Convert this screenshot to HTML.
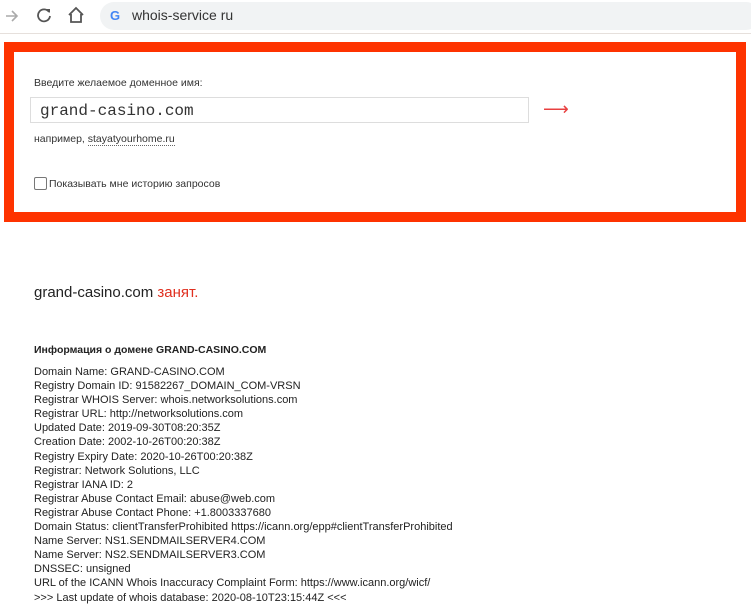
<!DOCTYPE html>
<html><head><meta charset="utf-8"><style>
body{margin:0;width:751px;height:613px;background:#fff;position:relative;overflow:hidden;font-family:"Liberation Sans","DejaVu Sans",sans-serif;color:#222}
.a{position:absolute;white-space:nowrap}
.bar{position:absolute;left:0;top:0;width:751px;height:33px;background:#fff;border-bottom:1px solid #e6e0dc}
.url{position:absolute;left:100px;top:2px;width:660px;height:28px;border-radius:14px;background:#f1f3f4}
.box{position:absolute;left:4px;top:42px;width:722px;height:160px;border:10px solid #fe3300;background:#fff}
.inp{position:absolute;left:30px;top:97px;width:499px;height:26px;border:1px solid #ddd;font-family:"Liberation Mono",monospace;font-size:16px;line-height:26px;padding-left:9px;box-sizing:border-box;color:#333}
.w{font-size:11px;line-height:14.1px;color:#222}
</style></head><body>
<div class="bar">
<svg class="a" style="left:4px;top:8px" width="16" height="16" viewBox="0 0 16 16"><path d="M2 8h11M8 3l5 5-5 5" stroke="#aaa" stroke-width="1.6" fill="none"/></svg>
<svg class="a" style="left:36px;top:7px" width="16" height="16" viewBox="0 0 16 16"><path d="M13 5A6 6 0 1 0 14 9" stroke="#555" stroke-width="1.8" fill="none"/><path d="M10 2l4 0 0 4z" fill="#555"/></svg>
<svg class="a" style="left:67px;top:6px" width="18" height="18" viewBox="0 0 18 18"><path d="M2 9L9 2l7 7M4 8v8h10V8" stroke="#555" stroke-width="1.8" fill="none"/></svg>
<div class="url"></div>
<div class="a" style="left:110px;top:8px;font-size:13px;font-weight:bold;color:#4285f4">G</div>
<div class="a" style="left:132px;top:7px;font-size:14px;color:#333">whois-service ru</div>
</div>
<div class="box"></div>
<div class="a" style="left:34px;top:77px;font-size:10.5px;color:#333">Введите желаемое доменное имя:</div>
<div class="inp">grand-casino.com</div>
<div class="a" style="left:543px;top:99px;font-size:18px;color:#e84040">⟶</div>
<div class="a" style="left:34px;top:133px;font-size:10.5px;color:#333">например, <span style="border-bottom:1px dotted #666">stayatyourhome.ru</span></div>
<div class="a" style="left:34px;top:177px;width:11px;height:11px;border:1px solid #777;border-radius:2px"></div>
<div class="a" style="left:49px;top:178px;font-size:10.5px;color:#333">Показывать мне историю запросов</div>
<div class="a" style="left:34px;top:284px;font-size:15px;color:#222">grand-casino.com <span style="color:#e03020">занят.</span></div>
<div class="a" style="left:34px;top:344px;font-size:10.5px;font-weight:bold">Информация о домене GRAND-CASINO.COM</div>
<div class="a w" style="left:34px;top:365px">Domain Name: GRAND-CASINO.COM<br>Registry Domain ID: 91582267_DOMAIN_COM-VRSN<br>Registrar WHOIS Server: whois.networksolutions.com<br>Registrar URL: http://networksolutions.com<br>Updated Date: 2019-09-30T08:20:35Z<br>Creation Date: 2002-10-26T00:20:38Z<br>Registry Expiry Date: 2020-10-26T00:20:38Z<br>Registrar: Network Solutions, LLC<br>Registrar IANA ID: 2<br>Registrar Abuse Contact Email: abuse@web.com<br>Registrar Abuse Contact Phone: +1.8003337680<br>Domain Status: clientTransferProhibited https://icann.org/epp#clientTransferProhibited<br>Name Server: NS1.SENDMAILSERVER4.COM<br>Name Server: NS2.SENDMAILSERVER3.COM<br>DNSSEC: unsigned<br>URL of the ICANN Whois Inaccuracy Complaint Form: https://www.icann.org/wicf/<br>&gt;&gt;&gt; Last update of whois database: 2020-08-10T23:15:44Z &lt;&lt;&lt;</div>
</body></html>
